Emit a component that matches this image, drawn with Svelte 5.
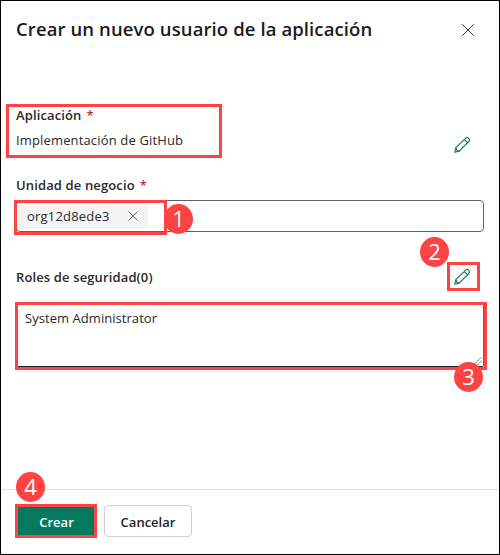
<script>
  const steps = [
    { n: 1, x: 164, y: 204 },
    { n: 2, x: 420, y: 237 },
    { n: 3, x: 454, y: 362 },
    { n: 4, x: 16, y: 472 }
  ];
  const frames = [
    { x: 6, y: 104, w: 216, h: 54 },
    { x: 14, y: 200, w: 153, h: 35 },
    { x: 447, y: 262, w: 33, h: 29 },
    { x: 15, y: 302, w: 472, h: 68 },
    { x: 15, y: 504, w: 82, h: 34 }
  ];
</script>

{#snippet pencil()}
  <svg class="pencil" width="16" height="16" viewBox="0 0 16 16" fill="none" stroke="#13795f" stroke-width="1.1" stroke-linejoin="round">
    <path d="M.7 15.3 1.8 10.7 11.5 1.3C13.7-.8 16.800 2.300 14.700 4.500L5.200 14.100Z" />
    <path d="M10.300 2.500 13.500 5.700M1.800 10.700C2.100 12.700 3.200 13.900 5.200 14.100" />
  </svg>
{/snippet}

<div class="panel">
  <header>
    <h1>Crear un nuevo usuario de la aplicación</h1>
    <svg width="12" height="12" viewBox="0 0 12 12" stroke="#444" stroke-width="1"><path d="M.2.2 11.800 11.800M11.800.2.2 11.800" /></svg>
  </header>

  <main>
    <div class="app-row">
      <div>
        <div class="label"><span>Aplicación</span><i>*</i></div>
        <div class="value">Implementación de GitHub</div>
      </div>
      {@render pencil()}
    </div>

    <div class="label unit"><span>Unidad de negocio</span><i>*</i></div>
    <div class="input">
      <div class="chip">
        <span>org12d8ede3</span>
        <svg width="10" height="10" viewBox="0 0 10 10" stroke="#666" stroke-width="1"><path d="M.5.5 9.500 9.500M9.500.5.5 9.500" /></svg>
      </div>
    </div>

    <div class="roles">
      <div class="label"><span>Roles de seguridad(0)</span></div>
      {@render pencil()}
    </div>
    <div class="area">
      <span>System Administrator</span>
      <svg width="8" height="8" viewBox="0 0 8 8" stroke="#555" stroke-width="1"><path d="M0 7.500 7.500 0M3.500 8 8 3.500" stroke-dasharray="1.600 .7" /></svg>
    </div>
  </main>

  <footer>
    <button class="primary"><span>Crear</span></button>
    <button class="secondary"><span>Cancelar</span></button>
  </footer>

  {#each frames as f}
    <div class="frame" style="left:{f.x}px;top:{f.y}px;width:{f.w}px;height:{f.h}px"></div>
  {/each}
  {#each steps as s}
    <div class="step" style="left:{s.x}px;top:{s.y}px"><span>{s.n}</span></div>
  {/each}
</div>

<style>
  :global(body) { margin: 0; background: #fff; }
  .panel, .panel * { box-sizing: border-box; }
  .panel {
    position: relative;
    display: flex;
    flex-direction: column;
    width: 500px;
    height: 555px;
    border: 1px solid #000;
    background: #fff;
    color: #292929;
    font-family: "Open Sans", "Noto Sans", sans-serif;
    font-size: 13px;
    line-height: 20px;
    white-space: nowrap;
    overflow: hidden;
  }
  svg { display: block; flex: none; }
  header {
    display: flex;
    justify-content: space-between;
    align-items: center;
    height: 58px;
    padding: 0 25px 0 15px;
  }
  h1 {
    margin: -2px 0 0;
    font-size: 18.500px;
    line-height: 24px;
    font-weight: 600;
    color: #1b1b1b;
    letter-spacing: 0.1px;
  }
  main { flex: 1; padding: 46px 15px 0; }
  .label { display: flex; gap: 5px; font-weight: 600; letter-spacing: 0.13px; }
  .label i { font-style: normal; color: #b5333b; }
  .app-row, .roles {
    display: flex;
    justify-content: space-between;
    padding-right: 14px;
  }
  .app-row { height: 50px; }
  .app-row .pencil { margin-top: 32px; }
  .value { margin-top: 5px; letter-spacing: 0.15px; }
  .unit { margin-top: 20px; }
  .input {
    height: 32px;
    margin-top: 5px;
    padding: 2px;
    border: 1px solid #616161;
    border-radius: 4px;
  }
  .chip {
    display: flex;
    align-items: center;
    justify-content: space-between;
    width: 129px;
    height: 26px;
    padding: 0 10px 0 8px;
    border-radius: 4px;
    background: #f5f5f5;
    letter-spacing: 0.2px;
  }
  .roles { margin-top: 35px; height: 20px; }
  .roles .pencil { margin-top: 2px; }
  .area {
    display: flex;
    justify-content: space-between;
    width: 468px;
    height: 64px;
    margin-top: 16px;
    padding: 4px 1px 1px 8px;
    border: 1px solid #616161;
    border-bottom-color: #222;
    border-radius: 2px;
    letter-spacing: 0.05px;
  }
  .area svg { align-self: flex-end; }
  footer {
    display: flex;
    gap: 7px;
    height: 65px;
    padding: 15px 0 0 15px;
    border-top: 1px solid #e0e0e0;
  }
  button {
    height: 32px;
    margin: 0;
    padding: 0 0 0;
    border: 1px solid #d1d1d1;
    border-radius: 4px;
    background: #fff;
    color: #242424;
    font: 600 13px/20px "Open Sans", "Noto Sans", sans-serif;
  }
  button span { display: block; padding-top: 1px; }
  .primary { width: 81px; background: #067a60; border-color: #067a60; color: #fff; }
  .secondary { width: 88px; }
  .frame {
    position: absolute;
    margin: -1px 0 0 -1px;
    border: 3px solid #ff4343;
  }
  .step {
    position: absolute;
    width: 29px;
    height: 30px;
    margin: -1px 0 0 -1px;
    border-radius: 50%;
    background: #ff4343;
    color: #fff;
    font-size: 22px;
    font-weight: 500;
    line-height: 28px;
    text-align: center;
  }
</style>
